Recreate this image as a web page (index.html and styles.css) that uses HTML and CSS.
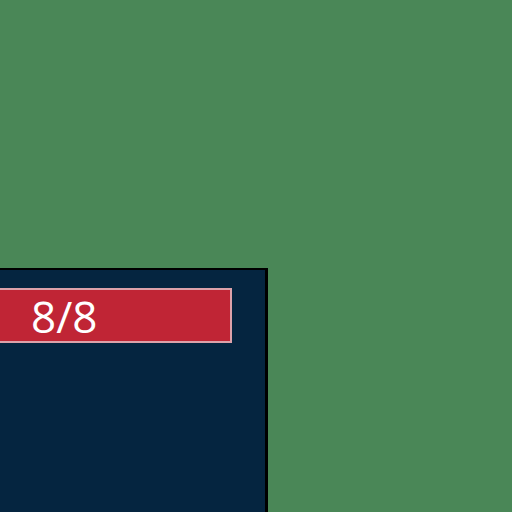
FILE: index.html
```html
<!DOCTYPE html>
<html>
<head>
<meta charset="utf-8">
<link rel="stylesheet" href="styles.css">
</head>
<body>
<div class="stage">
  <div class="panel">
    <div class="bar"><span class="count">8/8</span></div>
  </div>
</div>
</body>
</html>
```
FILE: styles.css
```css
html, body {
  margin: 0;
  padding: 0;
  width: 512px;
  height: 512px;
  overflow: hidden;
  background: #4a8757;
}
.stage {
  padding-top: 268px;
}
.panel {
  margin-left: -40px;
  width: 305px;
  height: 224px;
  background: #052540;
  border-top: 2px solid #000;
  border-right: 3px solid #000;
  padding-top: 18px;
}
.bar {
  height: 51px;
  background: #c02535;
  border: 2px solid #dda2aa;
  display: flex;
  align-items: center;
  padding-left: 69px;
  box-sizing: content-box;
  width: 199px;
}
.count {
  font-family: "Open Sans", sans-serif;
  font-size: 44px;
  color: #fff;
  line-height: 1;
}
```
